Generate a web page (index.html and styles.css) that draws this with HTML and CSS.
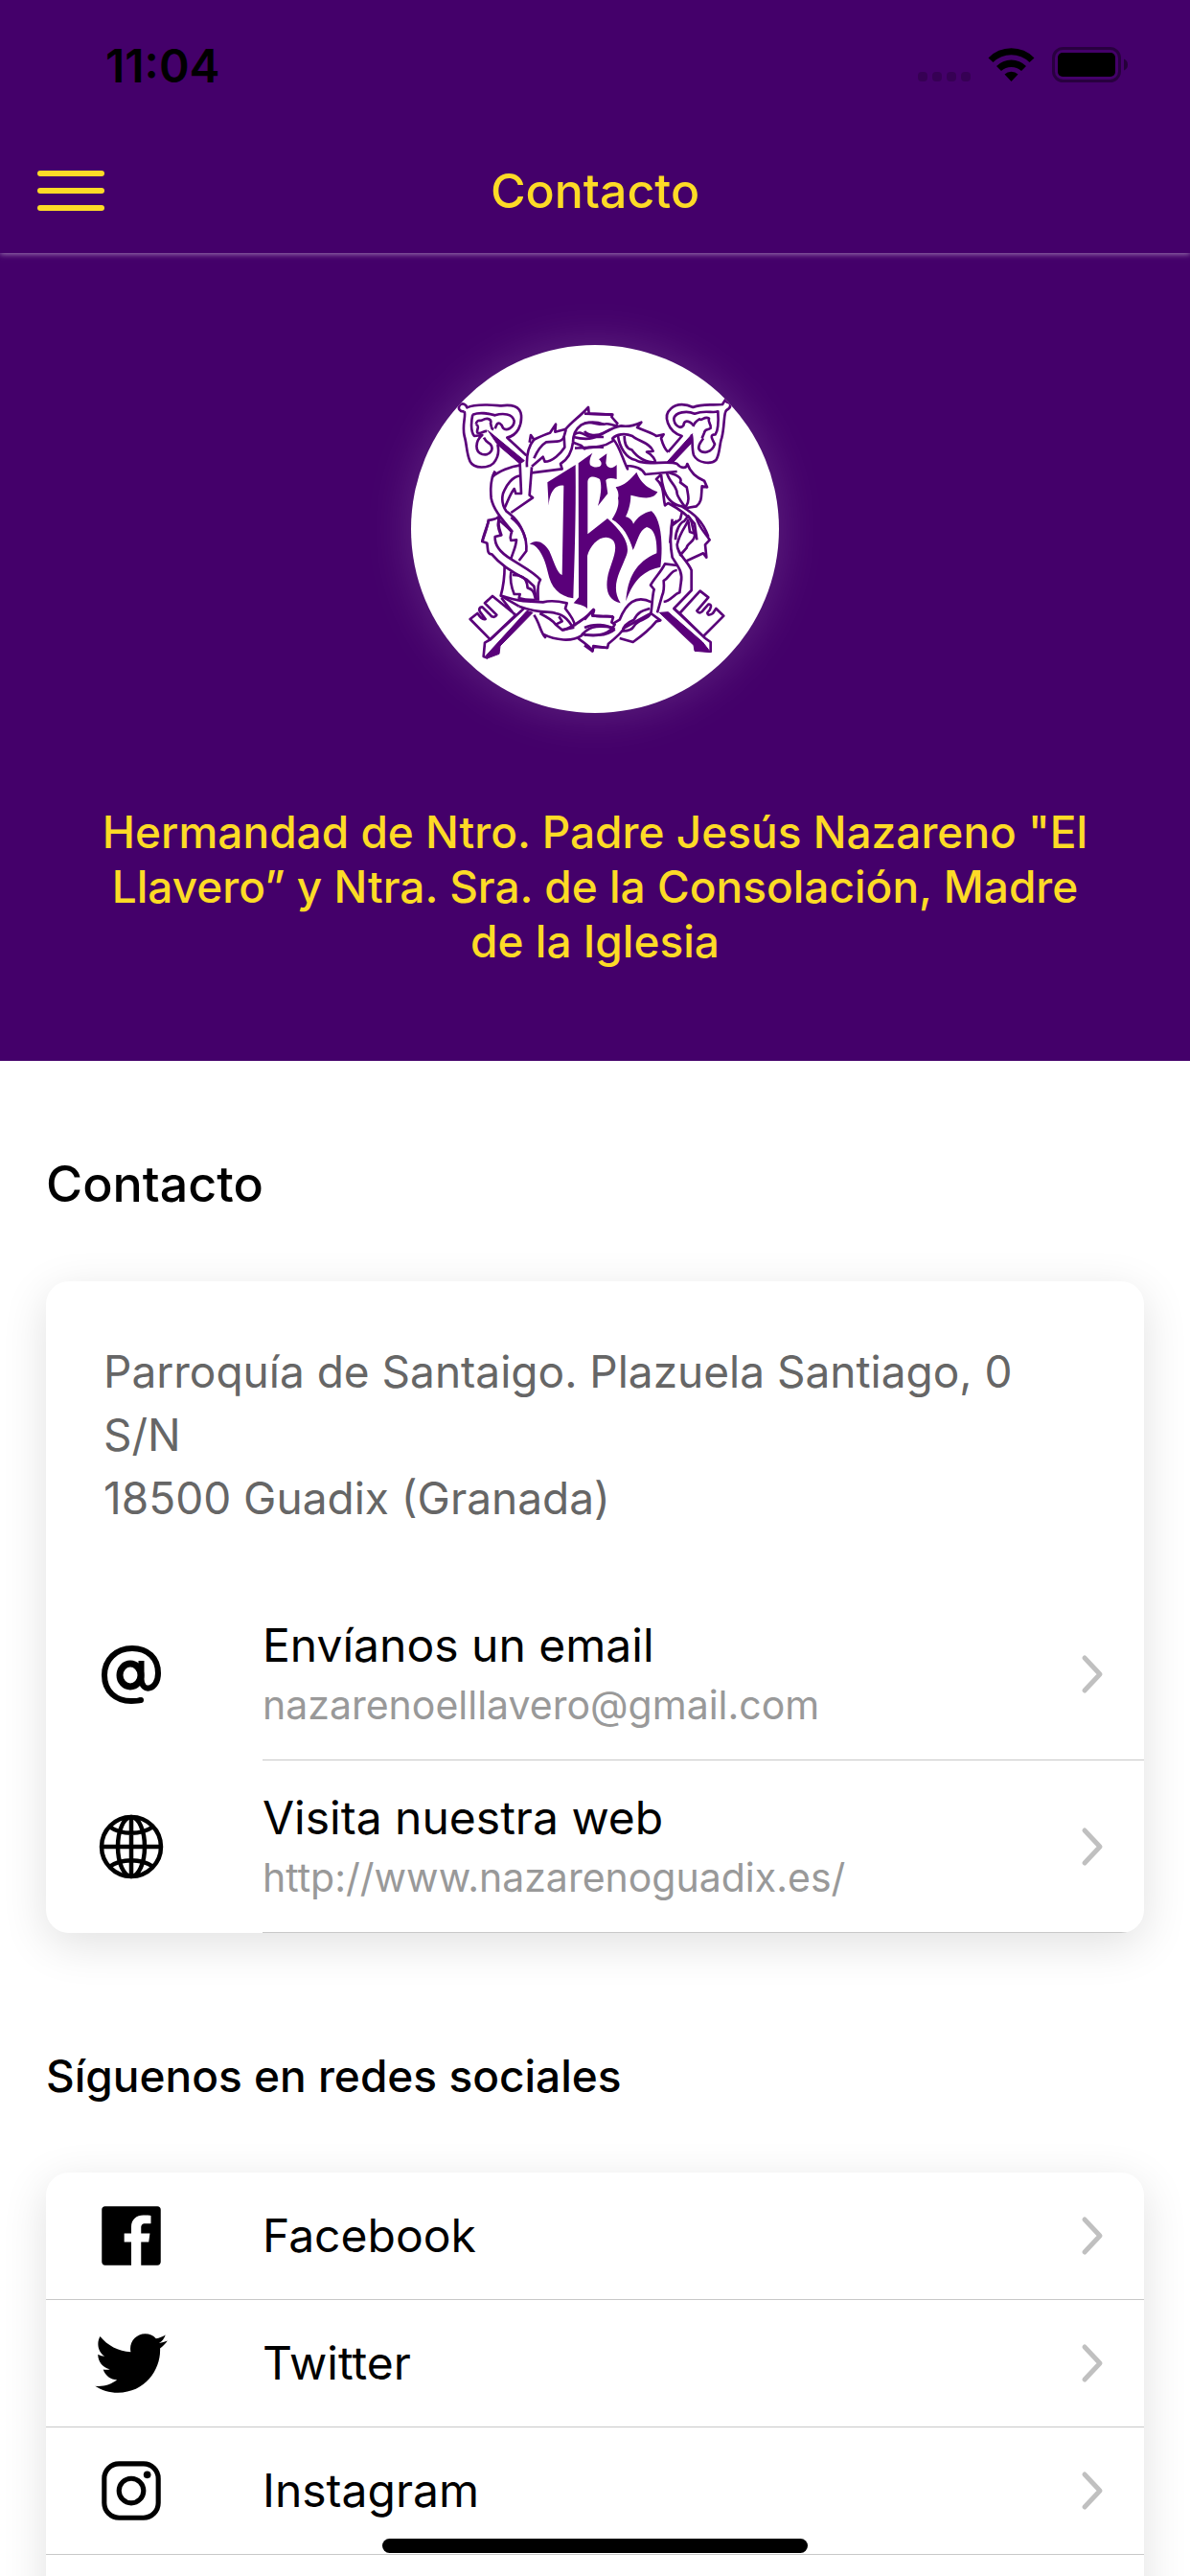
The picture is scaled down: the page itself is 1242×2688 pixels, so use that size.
FILE: index.html
```html
<!DOCTYPE html>
<html lang="es">

<head>
    <meta charset="UTF-8">
    <meta name="viewport" content="width=device-width, initial-scale=1.0">
    <title>Contacto</title>
    <link rel="stylesheet" href="styles.css">
</head>

<body>
    <div class="app">
        <header class="header">
            <div class="status-bar">
                <span class="status-time">11:04</span>
                <svg class="status-icons" width="220" height="38" viewBox="0 0 220 38" aria-hidden="true">
                    <g opacity="0.2">
                        <rect x="0" y="26" width="10" height="10" rx="4" />
                        <rect x="15" y="26" width="10" height="10" rx="4" />
                        <rect x="30" y="26" width="10" height="10" rx="4" />
                        <rect x="45" y="26" width="10" height="10" rx="4" />
                    </g>
                    <path d="M73.500 11.500 A33 33 0 0 1 121.500 11.500 L116.500 16 A27 27 0 0 0 78.500 16 Z" />
                    <path d="M82 20 A22 22 0 0 1 113 20 L108 25 A16 16 0 0 0 87 25 Z" />
                    <path d="M90.500 28.500 A10 10 0 0 1 104.500 28.500 L97.500 36 Z" />
                    <rect x="141.500" y="1.500" width="69" height="34" rx="10" fill="none" stroke="#000" stroke-width="3" opacity="0.4" />
                    <rect x="146" y="6" width="60" height="25" rx="5" />
                    <path d="M215 12.500 Q219 14 219 18.500 Q219 23 215 24.500 Z" opacity="0.45" />
                </svg>
            </div>
            <div class="toolbar">
                <button class="menu-button" type="button" aria-label="Menú">
                    <span class="menu-line"></span>
                    <span class="menu-line"></span>
                    <span class="menu-line"></span>
                </button>
                <h1 class="title">Contacto</h1>
            </div>
        </header>

        <main class="content">
            <section class="hero">
                <div class="logo">
                    <svg class="logo-image" viewBox="57 60 1152 1152" role="img" aria-label="Escudo de la Hermandad">
                        <!-- JHS -->
                        <g class="logo-fill">
                            <path d="M484 490 L572 435 C574 600 568 750 565 853 C520 845 495 820 485 770 C475 720 450 680 428 684 C445 668 470 672 490 705 C505 740 515 775 530 780 L535 500 C510 495 490 520 488 563 Z" />
                            <path d="M581 430 L625 398 C618 412 614 424 618 436 C630 446 648 444 652 436 C655 428 650 422 645 418 L670 400 L667 430 C672 450 690 447 701 435 L701 480 C685 475 672 475 667 484 L673 525 L642 564 C652 530 655 500 648 480 C630 468 610 470 610 490 L610 652 L672 603 C725 650 745 690 730 722 C712 770 680 815 713 868 C675 860 666 830 672 790 C678 750 710 700 690 672 C660 645 620 680 609 720 L609 885 C598 875 580 872 566 868 L582 850 Z" />
                            <path d="M763 458 C775 490 800 510 829 520 C815 545 785 540 745 530 C745 560 735 585 729 598 C742 600 750 610 753 620 C765 600 785 585 810 580 C845 610 845 700 838 755 C790 765 755 790 730 862 C735 790 760 740 826 712 C828 670 820 635 795 630 C770 640 765 680 752 702 C740 660 720 625 686 606 C700 585 710 560 705 540 C710 520 700 510 698 505 C725 500 745 480 763 458 Z" />
                        </g>
                        <!-- top left: key bow and crown -->
                        <g class="logo-line" transform="translate(180 180)">
                            <path d="M44 88 C30 90 22 78 30 68 C38 60 50 66 52 76 C80 62 130 68 160 70 C190 66 218 70 222 100 C224 130 212 162 178 170 L238 226" />
                            <path d="M44 88 C50 100 36 130 44 165 C52 190 50 220 62 245 C75 270 120 265 135 250 C148 235 154 215 148 192" />
                            <path d="M70 98 C95 88 120 95 140 100 C165 92 195 95 200 118 C200 140 175 150 165 140 C160 125 150 120 145 130 L140 142 M70 98 C66 115 62 150 75 165 L100 162 C78 180 75 215 100 222 C125 228 138 205 125 190 C115 185 110 180 105 170" />
                            <path d="M80 128 C85 110 92 120 100 115 C120 105 130 115 126 125 C130 135 125 140 135 145 M80 128 C95 135 80 145 85 155 C95 160 105 148 115 150" />
                            <path class="logo-solid" d="M118 148 L232 242 L218 252 L148 192 Z" />
                            <path d="M248 185 L252 162 L262 176 C285 165 295 160 312 155 L330 128 L328 152 L362 143 M262 235 C275 205 290 190 300 184 C325 180 345 188 355 170 L362 145" />
                            <path d="M255 260 L290 230 L296 245 C320 245 345 220 358 200 L356 165 M360 145 C380 120 405 105 432 75 L434 95 L508 98" />
                            <path d="M255 280 L350 268 L345 252 C365 240 380 220 384 185 C385 160 390 145 410 130 C430 118 460 120 480 128" />
                            <path d="M388 160 C410 145 420 165 440 168 L480 168 M385 185 L410 195 L420 205 C440 195 460 200 480 200" />
                            <path d="M262 176 C242 200 238 230 240 262 M218 250 L222 345 L205 345 L200 330 C185 350 180 370 170 390" />
                            <path d="M255 262 L248 350 L258 358 L190 405 M140 275 L132 293 C150 275 190 260 220 256" />
                            <path d="M140 275 C125 300 125 330 128 360 C135 400 175 440 195 465 M218 290 C195 290 175 320 165 345 C160 365 165 385 175 400 C210 425 225 450 236 490" />
                            <path d="M155 415 C140 430 125 425 120 430 C115 450 105 470 100 495 M155 415 C145 440 150 455 158 475" />
                        </g>
                        <!-- top right -->
                        <g class="logo-line" transform="translate(600 180)">
                            <path d="M262 215 L305 165 C260 150 245 100 270 80 C290 60 320 65 340 75 C370 62 400 70 432 66 L442 50 L445 58 C460 60 462 75 445 84 C435 90 440 130 430 170 C422 190 425 220 412 240 C395 255 355 250 342 225 C335 200 340 175 335 160" />
                            <path d="M340 130 C325 115 312 115 310 132 C300 145 280 130 280 110 C285 90 320 85 345 95 C380 82 400 95 418 88 C420 120 420 145 410 160 C390 160 400 175 408 190 C400 215 370 225 358 205 C355 190 365 185 372 172" />
                            <path d="M340 135 C345 120 355 115 360 112 C370 120 375 100 390 110 C385 122 398 128 395 140 C385 148 378 142 375 155 L368 172" />
                            <path class="logo-solid" d="M338 158 L334 188 L275 250 L255 250 Z" />
                            <path d="M0 95 L88 98 L85 105 L105 128 M0 125 C20 118 40 130 60 128 C80 122 85 135 105 132 M0 150 C10 165 40 165 60 155 L80 145" />
                            <path d="M-35 168 C50 190 60 140 115 133 C140 138 160 130 178 122 L165 138 C190 150 215 155 225 165 L248 160 L240 172 C245 190 250 205 262 215" />
                            <path d="M-30 203 C40 200 60 200 90 180 L88 172 C100 160 125 155 150 165 C165 180 205 185 215 212 L195 215 C215 225 222 240 222 248" />
                            <path d="M125 165 C125 190 130 205 148 208 C160 225 180 248 225 248 M90 175 C110 195 120 240 135 268 L132 258 C160 260 180 265 190 285 L290 276" />
                            <path d="M105 165 C110 200 130 235 160 240 C190 260 260 240 290 252 C300 265 320 270 322 252 C330 275 350 295 375 305 L384 325 L368 322 C365 350 370 370 350 385 L320 390" />
                            <path d="M258 280 C265 310 290 320 290 345 C290 350 310 385 320 390 M265 280 C300 290 305 300 300 310 L320 325 C325 350 330 370 318 385" />
                            <path d="M240 285 L225 300 C250 320 245 350 252 382 L262 375 C300 395 330 420 345 440 L352 490 M240 285 C245 350 270 380 305 385 C345 410 370 430 388 480" />
                            <path d="M275 432 L268 500 M275 445 L300 425 L305 405 M285 490 C285 460 300 435 312 432 L325 415 C340 430 335 450 345 470" />
                        </g>
                        <!-- bottom left: key bit and crown -->
                        <g class="logo-line" transform="translate(180 600)">
                            <path d="M120 5 C118 25 110 45 100 75 L115 80 C118 100 115 115 130 115 C150 140 190 170 240 195 L262 215 L270 260" />
                            <path d="M155 0 C145 20 155 40 160 55 L140 60 C138 90 165 115 190 130 M150 5 C165 20 180 30 192 45 C190 55 185 60 190 72 L207 70 C205 95 195 110 190 130" />
                            <path d="M190 0 C230 30 240 70 238 105 L215 135 M190 130 C220 150 260 170 282 195 C270 210 275 240 275 260" />
                            <path d="M170 150 C170 190 165 220 158 245 L215 278 M190 170 C185 200 192 220 200 240 L218 240 L215 252 C230 258 250 258 265 258" />
                            <path d="M195 180 C220 180 240 185 242 220 C262 225 262 240 268 258 M158 245 C180 250 210 262 240 262 L290 265 C310 260 340 262 365 268 L360 285 C380 310 390 325 390 340" />
                            <path d="M215 278 C290 305 310 290 330 300 C360 305 375 330 385 345 L350 352 L330 335 C320 320 300 310 280 300 M340 310 L350 325 L330 335" />
                            <path d="M262 305 C280 330 280 355 297 375 L290 365 C330 385 380 390 410 370 C430 345 450 335 510 345 M350 352 C370 350 410 325 450 290 L445 308 L510 310" />
                            <path d="M400 378 C420 395 430 395 445 418 L448 405 L492 408 M410 365 C440 372 490 372 515 350" />
                            <path d="M205 305 L132 246 L108 268 L145 305 C140 315 130 312 125 305 L100 280 C90 280 88 290 95 298 L110 318 C100 322 92 310 85 300 L62 318 L125 382 Z M160 252 L200 303" />
                            <path d="M230 285 L125 382 L108 392 L104 435 L118 440" />
                            <path class="logo-solid" d="M112 432 L240 292 L258 298 L156 402 L153 427 L118 440 Z" />
                        </g>
                        <!-- bottom right -->
                        <g class="logo-line" transform="translate(600 600)">
                            <path d="M275 5 C268 50 268 90 275 125 C290 150 310 170 302 205 L298 235 C280 240 270 262 248 264 M290 10 L275 20" />
                            <path d="M325 5 C325 20 300 40 290 85 C290 115 320 130 335 165 L335 228 L280 285 L298 300" />
                            <path d="M325 10 L330 45 L345 50 C350 75 320 80 320 95 L298 120 M350 0 C360 35 380 50 392 70 L378 85 L382 125 L372 112 L315 138" />
                            <path d="M290 150 L252 145 C240 170 215 195 207 212 L218 225 C212 245 212 280 208 300 L238 322 L225 325 C205 350 180 370 152 390 L110 378" />
                            <path d="M290 165 C270 165 265 190 248 198 C250 220 250 230 243 245 L228 298 M210 265 C160 240 130 270 110 320 L90 332" />
                            <path d="M205 285 C190 290 170 290 155 320 C130 330 120 345 120 355 C140 355 150 350 155 340 C170 315 195 325 208 300" />
                            <path d="M0 320 C10 310 15 300 28 288 L25 305 C50 315 80 305 90 312 L85 328 L95 335 C80 365 50 370 0 368 M0 345 C30 330 70 335 95 350" />
                            <path d="M0 400 L25 418 L28 402 L72 408 L75 395 C100 375 120 355 125 345 L208 300" />
                            <path d="M298 300 L362 230 L388 250 L352 292 C358 302 368 298 372 290 L388 272 C400 270 398 285 385 298 C385 308 395 305 402 300 L412 285 L436 308 L372 372 Z M280 285 L378 378 L395 390 L395 422" />
                            <path class="logo-solid" d="M235 298 L262 296 L370 390 L395 422 L345 418 L342 400 Z" />
                        </g>
                    </svg>
                </div>
                <p class="hero-name">Hermandad de Ntro. Padre Jesús Nazareno "El Llavero” y Ntra. Sra. de la Consolación, Madre de la Iglesia</p>
            </section>

            <section class="section">
                <h2 class="section-title">Contacto</h2>
                <div class="card">
                    <p class="address">Parroquía de Santaigo. Plazuela Santiago, 0 S/N<br>18500 Guadix (Granada)</p>
                    <ul class="list">
                        <li>
                            <a class="item item-inset" href="mailto:nazarenoelllavero@gmail.com">
                                <svg class="item-icon" viewBox="0 0 82 82" aria-hidden="true">
                                    <g fill="none" stroke="#000" stroke-width="6">
                                        <ellipse cx="40" cy="42" rx="11" ry="12" stroke-width="7" />
                                        <path d="M51.500 27 V46 C51.500 61 69 58 69 40 C69 24 58 14 42 14 C25 14 13 26 13 42 C13 59 25 69 41 69 C45 69 48 69 51 68" />
                                    </g>
                                    <circle cx="51" cy="68" r="3" />
                                </svg>
                                <span class="item-body">
                                    <span class="item-label">
                                        <span class="item-title">Envíanos un email</span>
                                        <span class="item-note">nazarenoelllavero@gmail.com</span>
                                    </span>
                                    <svg class="chevron" viewBox="0 0 24 42" aria-hidden="true"><path d="M4 4 L20 21 L4 38" /></svg>
                                </span>
                            </a>
                        </li>
                        <li>
                            <a class="item item-inset" href="http://www.nazarenoguadix.es/">
                                <svg class="item-icon" viewBox="0 0 82 82" aria-hidden="true">
                                    <g fill="none" stroke="#000" stroke-width="4.500">
                                        <circle cx="41" cy="41" r="31" />
                                        <ellipse cx="41" cy="41" rx="14" ry="31" />
                                        <path d="M41 10 V72 M10 41 H72 M18 20 C31 29 51 29 64 20 M18 62 C31 53 51 53 64 62" />
                                    </g>
                                </svg>
                                <span class="item-body">
                                    <span class="item-label">
                                        <span class="item-title">Visita nuestra web</span>
                                        <span class="item-note">http://www.nazarenoguadix.es/</span>
                                    </span>
                                    <svg class="chevron" viewBox="0 0 24 42" aria-hidden="true"><path d="M4 4 L20 21 L4 38" /></svg>
                                </span>
                            </a>
                        </li>
                    </ul>
                </div>
            </section>

            <section class="section section-social">
                <h3 class="section-title section-title-small">Síguenos en redes sociales</h3>
                <div class="card card-social">
                    <ul class="list">
                        <li>
                            <a class="item" href="#facebook">
                                <svg class="item-icon" viewBox="0 0 512 512" aria-hidden="true">
                                    <path d="M426.800 64H85.200C73.500 64 64 73.500 64 85.200v341.600c0 11.700 9.500 21.200 21.200 21.200H256V296h-45.900v-56H256v-41.400c0-49.600 34.400-76.600 78.700-76.600 21.200 0 44 1.600 49.300 2.300v51.800h-35.300c-24.100 0-28.700 11.400-28.700 28.200V240h57.400l-7.500 56H320v152h106.800c11.700 0 21.200-9.500 21.200-21.200V85.200c0-11.700-9.500-21.200-21.200-21.200z" />
                                </svg>
                                <span class="item-body">
                                    <span class="item-title">Facebook</span>
                                    <svg class="chevron" viewBox="0 0 24 42" aria-hidden="true"><path d="M4 4 L20 21 L4 38" /></svg>
                                </span>
                            </a>
                        </li>
                        <li>
                            <a class="item" href="#twitter">
                                <svg class="item-icon" viewBox="0 0 512 512" aria-hidden="true">
                                    <path d="M492 109.500c-17.400 7.700-36 12.900-55.600 15.300 20-12 35.400-31 42.600-53.600-18.700 11.100-39.400 19.200-61.500 23.500C399.800 75.800 374.600 64 346.800 64c-53.500 0-96.800 43.400-96.800 96.900 0 7.600.8 15 2.500 22.100-80.500-4-151.900-42.600-199.600-101.300-8.300 14.300-13.100 31-13.100 48.700 0 33.600 17.200 63.300 43.200 80.700-16-.4-31-4.800-44-12.100v1.200c0 47 33.400 86.100 77.700 95-8.100 2.200-16.700 3.400-25.500 3.400-6.200 0-12.300-.6-18.200-1.800 12.300 38.500 48.100 66.500 90.500 67.300-33.100 26-74.900 41.500-120.300 41.500-7.800 0-15.500-.5-23.100-1.400C62.800 432 113.700 448 168.300 448 346.600 448 444 300.300 444 172.200c0-4.200-.1-8.400-.3-12.500C462.600 146 479 129 492 109.500z" />
                                </svg>
                                <span class="item-body">
                                    <span class="item-title">Twitter</span>
                                    <svg class="chevron" viewBox="0 0 24 42" aria-hidden="true"><path d="M4 4 L20 21 L4 38" /></svg>
                                </span>
                            </a>
                        </li>
                        <li>
                            <a class="item" href="#instagram">
                                <svg class="item-icon" viewBox="0 0 512 512" aria-hidden="true">
                                    <g fill="none" stroke="#000" stroke-width="32">
                                        <rect x="80" y="80" width="352" height="352" rx="96" />
                                        <circle cx="256" cy="256" r="80" />
                                    </g>
                                    <circle cx="360" cy="152" r="24" />
                                </svg>
                                <span class="item-body">
                                    <span class="item-title">Instagram</span>
                                    <svg class="chevron" viewBox="0 0 24 42" aria-hidden="true"><path d="M4 4 L20 21 L4 38" /></svg>
                                </span>
                            </a>
                        </li>
                    </ul>
                </div>
            </section>
        </main>

        <div class="home-indicator"></div>
    </div>
</body>

</html>
```

FILE: styles.css
```css
* {
    box-sizing: border-box;
}

body {
    margin: 0;
    font-family: Inter, "Liberation Sans", sans-serif;
    background-color: #fff;
    color: #000;
}

h1,
h2,
h3,
p,
ul {
    margin: 0;
    padding: 0;
}

.app {
    display: flex;
    flex-direction: column;
    height: 100vh;
    overflow: hidden;
}

/* Header */
.header {
    flex: none;
    background-color: #44006a;
    box-shadow: 0 1px 6px rgba(255, 255, 255, 0.5);
    z-index: 1;
}

.status-bar {
    display: flex;
    align-items: center;
    justify-content: space-between;
    height: 132px;
    padding: 4px 64px 0 110px;
}

.status-time {
    font-size: 48px;
    font-weight: 600;
}

.toolbar {
    display: grid;
    grid-template-columns: 84px 1fr 84px;
    align-items: center;
    height: 132px;
    padding: 2px 36px 0;
}

.menu-button {
    display: flex;
    flex-direction: column;
    gap: 12px;
    width: 76px;
    padding: 12px 3px;
    border: 0;
    background: none;
}

.menu-line {
    height: 6px;
    border-radius: 3px;
    background-color: #fddb26;
}

.title {
    color: #fddb26;
    font-size: 50px;
    font-weight: 500;
    line-height: 60px;
    text-align: center;
}

/* Content */
.content {
    flex: 1;
    overflow-y: auto;
    scrollbar-width: none;
}

.hero {
    display: flex;
    flex-direction: column;
    align-items: center;
    padding: 96px;
    background-color: #44006a;
}

.logo {
    width: 384px;
    height: 384px;
    border-radius: 50%;
    overflow: hidden;
    background-color: #fff;
    box-shadow: 0 0 48px rgba(255, 255, 255, 0.15);
}

.logo-image {
    display: block;
    width: 100%;
}

.logo-fill {
    fill: #5a007a;
}

.logo-line {
    fill: none;
    stroke: #5a007a;
    stroke-width: 8;
    stroke-linejoin: round;
}

.logo-solid {
    fill: #5a007a;
    stroke-width: 3;
}

.hero-name {
    margin-top: 96px;
    color: #fddb26;
    font-size: 46px;
    font-weight: 500;
    line-height: 57px;
    text-align: center;
}

.section {
    padding: 96px 48px 0;
}

.section-social {
    padding-top: 116px;
}

.section-title {
    font-size: 52px;
    font-weight: 500;
    line-height: 66px;
}

.section-title-small {
    font-size: 46px;
}

.card {
    margin-top: 68px;
    border-radius: 24px;
    overflow: hidden;
    background-color: #fff;
    box-shadow: 0 12px 48px rgba(0, 0, 0, 0.12);
}

.card-social {
    padding-bottom: 133px;
}

.address {
    padding: 61px 60px;
    color: #666;
    font-size: 46px;
    line-height: 66px;
}

.list {
    list-style: none;
}

.item {
    display: flex;
    align-items: center;
    height: 133px;
    padding-left: 48px;
    border-bottom: 1px solid #c8c8c8;
    color: #000;
    text-decoration: none;
}

.item-inset {
    height: 180px;
    border-bottom: 0;
}

.item-icon {
    flex: none;
    width: 82px;
    height: 82px;
    margin-right: 96px;
}

.item-body {
    display: flex;
    flex: 1;
    align-items: center;
    justify-content: space-between;
    height: 100%;
    padding-right: 42px;
}

.item-inset .item-body {
    border-bottom: 1px solid #c8c8c8;
}

.item-label {
    display: flex;
    flex-direction: column;
}

.item-title {
    font-size: 48px;
    line-height: 64px;
}

.item-note {
    color: #999;
    font-size: 41px;
    line-height: 60px;
}

.chevron {
    width: 24px;
    height: 42px;
    fill: none;
    stroke: #c0c0c0;
    stroke-width: 5;
    stroke-linecap: round;
    stroke-linejoin: round;
}

.home-indicator {
    position: fixed;
    bottom: 24px;
    left: 50%;
    width: 444px;
    height: 15px;
    margin-left: -222px;
    border-radius: 8px;
    background-color: #000;
}
```
